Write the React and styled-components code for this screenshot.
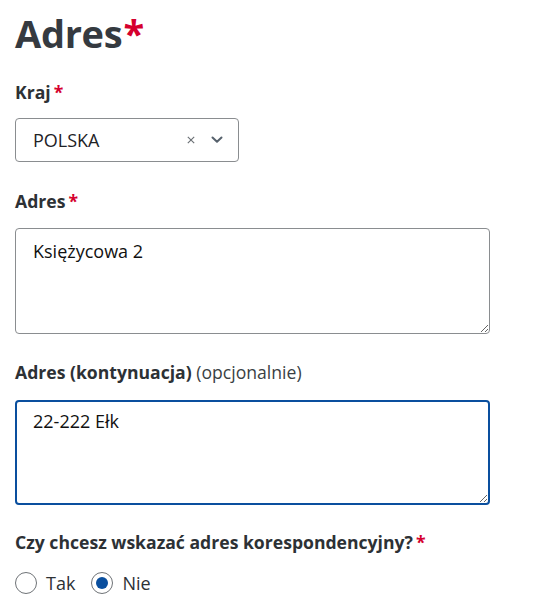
import React, { useEffect, useRef } from 'react'
import styled, { createGlobalStyle } from 'styled-components'

const GlobalStyle = createGlobalStyle`
    body {
        margin: 0;
        background: #ffffff;
        font-family: "Open Sans", "Liberation Sans", sans-serif;
        color: #2b2f33;
    }
`

const Page = styled.div`
    display: flex;
    flex-direction: column;
    padding: 10px 15px 0;
`

const Heading = styled.h1`
    margin: 0 0 24px;
    font-size: 38px;
    line-height: 46px;
    font-weight: 700;
    letter-spacing: -0.3px;
    color: #353a40;
`

const Star = styled.span`
    color: #d5002e;
    margin-left: ${p => (p.$tight ? '1px' : '3px')};
`

const Field = styled.div`
    display: flex;
    flex-direction: column;
    margin-bottom: ${p => p.$gap || '27px'};
`

const Label = styled.label`
    font-size: 17.6px;
    line-height: 24px;
    font-weight: 700;
    color: #2d3135;
    margin-bottom: ${p => p.$gap || '14px'};
`

const Optional = styled.span`
    font-weight: 400;
    color: #3a3f44;
`

const Select = styled.div`
    box-sizing: border-box;
    width: 224px;
    height: 44px;
    display: flex;
    align-items: center;
    padding: 0 15px 0 17px;
    border: 1px solid #8a8d90;
    border-radius: 4px;
    font-size: 18px;
    line-height: 24px;
    color: #1e2226;
`

const SelectValue = styled.span`
    flex: 1;
`

const ClearIcon = styled.svg`
    width: 8px;
    height: 8px;
    margin-right: 16px;
`

const Chevron = styled.svg`
    width: 12px;
    height: 8px;
`

const TextArea = styled.textarea`
    box-sizing: border-box;
    width: 475px;
    height: ${p => (p.$focused ? '105px' : '106px')};
    padding: ${p => (p.$focused ? '7px 16px' : '10px 17px')};
    border: ${p => (p.$focused ? '2px solid #0a4f9e' : '1px solid #8a8d90')};
    border-radius: 4px;
    font-family: "Open Sans", "Liberation Sans", sans-serif;
    font-size: 18px;
    line-height: 24px;
    color: #111111;
    caret-color: #000000;
    outline: none;
    resize: vertical;
`

const RadioRow = styled.div`
    display: flex;
    align-items: center;
    gap: 16px;
    margin-top: 3px;
`

const RadioOption = styled.label`
    display: flex;
    align-items: center;
    gap: 9px;
    font-size: 18px;
    line-height: 24px;
    color: #2d3135;
`

const RadioCircle = styled.span`
    box-sizing: border-box;
    width: 22px;
    height: 22px;
    border-radius: 50%;
    border: 1.5px solid #6f7377;
    display: flex;
    align-items: center;
    justify-content: center;

    &::after {
        content: '';
        width: 12px;
        height: 12px;
        border-radius: 50%;
        background: ${p => (p.$checked ? '#0a4f9e' : 'transparent')};
    }
`

const Radio = ({ label, checked }) => (
    <RadioOption>
        <RadioCircle $checked={checked} />
        {label}
    </RadioOption>
)

const App = () => {
    const focusRef = useRef(null)

    useEffect(() => {
        const el = focusRef.current
        if (el) {
            el.focus()
            el.setSelectionRange(el.value.length, el.value.length)
        }
    }, [])

    return (
        <Page>
            <GlobalStyle />
            <Heading>
                Adres<Star $tight>*</Star>
            </Heading>

            <Field>
                <Label>
                    Kraj<Star>*</Star>
                </Label>
                <Select>
                    <SelectValue>POLSKA</SelectValue>
                    <ClearIcon viewBox="0 0 10 10">
                        <path d="M1 1 L9 9 M9 1 L1 9" stroke="#6b7075" strokeWidth="1.4" fill="none" />
                    </ClearIcon>
                    <Chevron viewBox="0 0 12 8">
                        <path d="M1.5 1.5 L6 5.8 L10.5 1.5" stroke="#56616c" strokeWidth="2" fill="none" strokeLinecap="round" strokeLinejoin="round" />
                    </Chevron>
                </Select>
            </Field>

            <Field $gap="26px">
                <Label $gap="15px">
                    Adres<Star>*</Star>
                </Label>
                <TextArea defaultValue="Księżycowa 2" />
            </Field>

            <Field $gap="25px">
                <Label $gap="16px">
                    Adres (kontynuacja) <Optional>(opcjonalnie)</Optional>
                </Label>
                <TextArea ref={focusRef} $focused defaultValue="22-222 Ełk" />
            </Field>

            <Field>
                <Label>
                    Czy chcesz wskazać adres korespondencyjny?<Star>*</Star>
                </Label>
                <RadioRow>
                    <Radio label="Tak" />
                    <Radio label="Nie" checked />
                </RadioRow>
            </Field>
        </Page>
    )
}

export default App
